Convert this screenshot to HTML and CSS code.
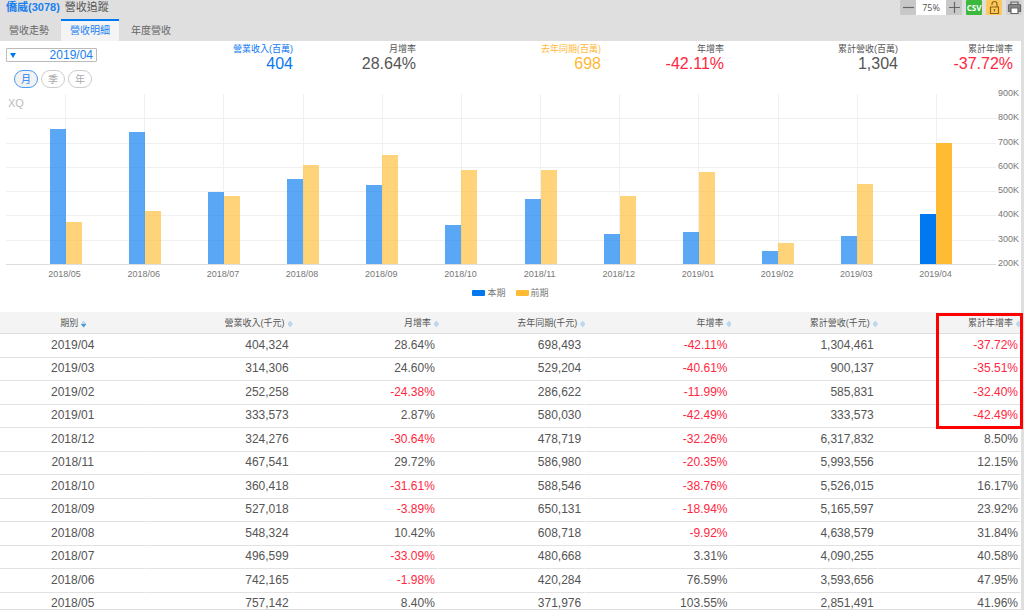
FILE: index.html
```html
<!DOCTYPE html>
<html lang="zh-Hant">
  <head>
    <meta charset="UTF-8" />
    <title>僑威(3078) 營收追蹤</title>
    <link rel="stylesheet" href="styles.css">
  </head>
  <body>
    <div class="app">
      <header class="top">
        <div class="titlebar">
          <h1><b>僑威(3078)</b> 營收追蹤</h1>
          <div class="tools">
            <div class="zoom">
              <button type="button" aria-label="縮小">
                <svg viewBox="0 0 15 15"><path d="M2 7.5h11" /></svg>
              </button>
              <output>75%</output>
              <button type="button" aria-label="放大">
                <svg viewBox="0 0 15 15"><path d="M2 7.5h11M7.5 2v11" /></svg>
              </button>
            </div>
            <button type="button" class="csv">CSV</button>
            <button type="button" class="lock" aria-label="鎖定">
              <svg viewBox="0 0 15 15"><path d="M3.500 7h8v6.500h-8zM5 5V4a2.500 2.500 0 0 1 5 0v3M7.500 9v2.500M6.700 9.500h1.600" /></svg>
            </button>
            <button type="button" class="print" aria-label="列印">
              <svg viewBox="0 0 15 15">
                <path d="M4 5V2h7v3" />
                <path class="body" d="M2.500 4.500h10q1 0 1 1v6h-12v-6q0-1 1-1z" />
                <path class="paper" d="M4 8h7v5.500h-7z" />
              </svg>
            </button>
          </div>
        </div>
        <nav class="tabs">
          <a href="#trend">營收走勢</a>
          <a href="#detail" class="selected">營收明細</a>
          <a href="#year">年度營收</a>
        </nav>
      </header>
      <main class="panel">
        <section class="summary">
          <div class="pick">
            <div class="month">
              <select aria-label="月份"><option>2019/04</option><option>2019/03</option></select>
            </div>
            <div class="periods">
              <button type="button" class="selected">月</button>
              <button type="button">季</button>
              <button type="button">年</button>
            </div>
          </div>
          <dl class="now"><dt>營業收入(百萬)</dt><dd>404</dd></dl>
          <dl><dt>月增率</dt><dd>28.64%</dd></dl>
          <dl class="last"><dt>去年同期(百萬)</dt><dd>698</dd></dl>
          <dl><dt>年增率</dt><dd class="minus">-42.11%</dd></dl>
          <dl><dt>累計營收(百萬)</dt><dd>1,304</dd></dl>
          <dl><dt>累計年增率</dt><dd class="minus">-37.72%</dd></dl>
        </section>
        <section class="chart">
          <div class="plot">
            <div class="lines"><i></i><i></i><i></i><i></i><i></i><i></i><i></i></div>
            <div class="mark">XQ</div>
            <div class="bars" id="bars"></div>
          </div>
          <div class="yaxis">
            <span>900K</span><span>800K</span><span>700K</span><span>600K</span>
            <span>500K</span><span>400K</span><span>300K</span><span>200K</span>
          </div>
          <div class="xaxis" id="xaxis"></div>
          <div class="legend">
            <span class="now">本期</span>
            <span class="last">前期</span>
          </div>
        </section>
        <section class="detail">
          <table>
            <thead>
              <tr>
                <th><button type="button" class="desc">期別</button></th>
                <th><button type="button">營業收入(千元)</button></th>
                <th><button type="button">月增率</button></th>
                <th><button type="button">去年同期(千元)</button></th>
                <th><button type="button">年增率</button></th>
                <th><button type="button">累計營收(千元)</button></th>
                <th><button type="button">累計年增率</button></th>
              </tr>
            </thead>
            <tbody id="rows">
<tr><td>2019/04</td><td>404,324</td><td>28.64%</td><td>698,493</td><td class="minus">-42.11%</td><td>1,304,461</td><td class="minus">-37.72%</td></tr>
<tr><td>2019/03</td><td>314,306</td><td>24.60%</td><td>529,204</td><td class="minus">-40.61%</td><td>900,137</td><td class="minus">-35.51%</td></tr>
<tr><td>2019/02</td><td>252,258</td><td class="minus">-24.38%</td><td>286,622</td><td class="minus">-11.99%</td><td>585,831</td><td class="minus">-32.40%</td></tr>
<tr><td>2019/01</td><td>333,573</td><td>2.87%</td><td>580,030</td><td class="minus">-42.49%</td><td>333,573</td><td class="minus">-42.49%</td></tr>
<tr><td>2018/12</td><td>324,276</td><td class="minus">-30.64%</td><td>478,719</td><td class="minus">-32.26%</td><td>6,317,832</td><td>8.50%</td></tr>
<tr><td>2018/11</td><td>467,541</td><td>29.72%</td><td>586,980</td><td class="minus">-20.35%</td><td>5,993,556</td><td>12.15%</td></tr>
<tr><td>2018/10</td><td>360,418</td><td class="minus">-31.61%</td><td>588,546</td><td class="minus">-38.76%</td><td>5,526,015</td><td>16.17%</td></tr>
<tr><td>2018/09</td><td>527,018</td><td class="minus">-3.89%</td><td>650,131</td><td class="minus">-18.94%</td><td>5,165,597</td><td>23.92%</td></tr>
<tr><td>2018/08</td><td>548,324</td><td>10.42%</td><td>608,718</td><td class="minus">-9.92%</td><td>4,638,579</td><td>31.84%</td></tr>
<tr><td>2018/07</td><td>496,599</td><td class="minus">-33.09%</td><td>480,668</td><td>3.31%</td><td>4,090,255</td><td>40.58%</td></tr>
<tr><td>2018/06</td><td>742,165</td><td class="minus">-1.98%</td><td>420,284</td><td>76.59%</td><td>3,593,656</td><td>47.95%</td></tr>
<tr><td>2018/05</td><td>757,142</td><td>8.40%</td><td>371,976</td><td>103.55%</td><td>2,851,491</td><td>41.96%</td></tr>
            </tbody>
          </table>
          <div class="highlight"></div>
        </section>
      </main>
    </div>
    <script type="text/javascript" src="script.js"></script>
  </body>
</html>
```
FILE: styles.css
```css
* { box-sizing: border-box; }
body {
  margin: 0; background-color: #dfdfdf; color: #555;
  font-family: "Liberation Sans", "Noto Sans CJK TC", sans-serif;
  font-size: 12px;
}
button, select { font-family: inherit; color: inherit; margin: 0; }
button { border: 0; padding: 0; background: none; cursor: pointer; }
.app {
  height: 100vh; overflow: hidden;
  display: flex; flex-direction: column;
  border-bottom: #ddd solid 1px;
}
.minus { color: #ff2740; }

/* title, tools and tabs */
.titlebar {
  display: flex; justify-content: space-between; align-items: center;
  height: 19px; padding: 0 2px 4px 6px;
}
h1 { margin: 0; font-size: 11px; line-height: 15px; font-weight: normal; }
h1 b { color: #1a80f0; margin-right: 2px; }
.tools { display: flex; gap: 4px; }
.tools button {
  width: 16px; height: 15px; background-color: #c8c8c8;
  border-radius: 1px;
}
.tools svg {
  display: block; width: 15px; height: 15px; margin: 0 auto;
  fill: none; stroke: #666; stroke-width: 1.2;
}
.zoom { display: flex; }
.zoom output {
  width: 30px; height: 15px; background-color: #fff;
  font: 9px/15px "Open Sans", sans-serif; text-align: center;
}
.tools .csv {
  background-color: #3cb83c; color: #fff;
  font: bold 8px/15px "Open Sans", sans-serif;
}
.tools .lock { background-color: #ffc85c; }
.tools .lock svg { stroke: #8a6418; }
.tools .print { background-color: #d2d2d2; }
.print .body { fill: #888; }
.print .paper { fill: #fff; }
.tabs { display: flex; gap: 3px; }
.tabs a {
  padding: 0 9px; border-top: transparent solid 2px;
  font-size: 10px; line-height: 20px; color: #666; text-decoration: none;
}
.tabs a.selected {
  border-color: #0078f0; background-color: #f4f4f4; color: #1a80f0;
}

/* picked month and its figures */
.panel { flex: 1; margin-right: 3px; background-color: #fff; }
.summary {
  display: grid; height: 46px; padding: 2px 8px 0 6px;
  grid-template-columns: 104px 183fr 123fr 185fr 123fr 174fr 115fr;
}
.pick { padding-top: 5px; }
.month { position: relative; width: 91px; }
.month:before {
  content: ""; position: absolute; left: 4px; top: 5px;
  border: transparent solid 3px; border-top: #0078f0 solid 5px;
  border-bottom: 0;
}
.month select {
  display: block; width: 100%; height: 14px; padding: 0 3px 0 14px;
  border: #bbb solid 1px; border-radius: 1px;
  background: none; appearance: none;
  color: #1a80f0; font-size: 12px; line-height: 12px;
  text-align: right; text-align-last: right;
}
.periods { display: flex; gap: 3px; margin: 8px 0 0 8px; }
.periods button {
  width: 24px; height: 18px; border: #ccc solid 1px; border-radius: 9px;
  color: #aaa; font-size: 10px; line-height: 15px;
}
.periods button.selected {
  border-color: #4a9bf2; background-color: #f2f2f2; color: #1a80f0;
}
.summary dl { margin: 0; text-align: right; white-space: nowrap; }
.summary dt { font-size: 9px; line-height: 12px; }
.summary dd { margin: 0; font-size: 16px; line-height: 18px; }
.summary dl.now { color: #0a78f0; }
.summary dl.last { color: #ffb836; }

/* bar chart */
.chart {
  display: grid; grid-template-columns: 1fr 23px;
  padding: 0 2px 13px 6px; color: #777; font-size: 9px; line-height: 12px;
}
.plot {
  display: grid; height: 171px; margin-top: 7px;
  border-bottom: #ddd solid 1px;
}
.lines, .mark, .bars { grid-area: 1 / 1; }
.lines { display: flex; flex-direction: column; }
.lines i { flex: 1; border-top: #f0f0f0 solid 1px; }
.lines i:first-child { border-color: transparent; }
.mark { padding: 3px 2px; color: #bbb; font-size: 11px; }
.bars, .xaxis { display: flex; padding: 0 20px; }
.slot {
  flex: 1; display: flex; align-items: flex-end; justify-content: center;
  background: linear-gradient(#f0f0f0, #f0f0f0) center / 1px 100% no-repeat;
}
.slot div { width: 16px; opacity: 0.65; }
.slot:last-child div { opacity: 1; }
.slot .now { background-color: #0078f0; }
.slot .last { background-color: #ffbb33; }
.yaxis {
  display: flex; flex-direction: column; justify-content: space-between;
  text-align: right; height: 182px;
  grid-row: 1 / 3; grid-column: 2;
}
.xaxis { grid-column: 1; padding: 3px 21px 1px 19px; }
.xaxis span { flex: 1; text-align: center; }
.legend {
  grid-column: 1 / 3; display: flex; justify-content: center;
  gap: 10px; padding: 6px 4px 0 0;
}
.legend span { display: flex; align-items: center; gap: 2px; }
.legend span:before {
  content: ""; width: 13px; height: 6px; border-radius: 1px;
  background-color: #0078f0;
}
.legend span.last:before { background-color: #ffbb33; }

/* monthly table */
.detail { position: relative; }
table { width: 100%; table-layout: fixed; border-spacing: 0; }
th, td { padding: 0 3px 2px; text-align: right; }
th {
  width: 14.33%; height: 22px; padding: 0; background-color: #f4f4f4;
  border-bottom: #ddd solid 1px; font-weight: normal;
}
th:last-child { width: auto; }
th button {
  display: inline-flex; align-items: center; gap: 3px;
  font-size: 9px; line-height: 20px; vertical-align: top;
}
th button:after {
  content: ""; width: 5px; height: 7px; margin-top: 3px;
  background-color: #bcd8ee;
  clip-path: polygon(50% 0, 100% 43%, 100% 57%, 50% 100%, 0 57%, 0 43%);
}
th button.desc:after { background: linear-gradient(#bcd8ee 45%, #4a9bd8 45%); }
td {
  height: 24px; line-height: 20px;
  border-bottom: #e2e2e2 solid 1px; border-right: #fff solid 1px;
}
td:last-child { padding-right: 2px; }
tr:nth-child(even) td { height: 23px; }
th:first-child, td:first-child { text-align: center; }
.highlight {
  position: absolute; top: 1px; right: -2px; width: 87px; height: 116px;
  border: #f00 solid 3px; pointer-events: none;
}
```
FILE: script.js
```js
// draws the chart from the table, oldest month first
var rows = document.getElementById('rows').rows;
var bars = document.getElementById('bars');
var xaxis = document.getElementById('xaxis');
var low = 200000, high = 900000;

function bar(slot, name, text) {
  var value = parseInt(text.split(',').join(''));
  var div = document.createElement('div');
  div.className = name;
  div.style.height = ((value - low) / (high - low) * 100) + '%';
  slot.appendChild(div);
}

for (var i = rows.length - 1; i >= 0; --i) {
  var cells = rows[i].cells;
  var slot = document.createElement('div');
  slot.className = 'slot';
  bar(slot, 'now', cells[1].textContent);
  bar(slot, 'last', cells[3].textContent);
  bars.appendChild(slot);
  var label = document.createElement('span');
  label.textContent = cells[0].textContent;
  xaxis.appendChild(label);
}
```
